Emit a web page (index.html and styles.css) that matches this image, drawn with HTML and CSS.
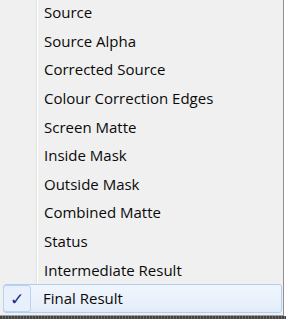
FILE: index.html
```html
<!DOCTYPE html>
<html lang="en">
<head>
  <meta charset="UTF-8" />
  <title>View Menu</title>
  <link rel="stylesheet" href="styles.css">
</head>
<body>
  <div class="menu">
    <ul class="items">
      <li class="item"><span class="check"></span><span class="label">Source</span></li>
      <li class="item"><span class="check"></span><span class="label">Source Alpha</span></li>
      <li class="item"><span class="check"></span><span class="label">Corrected Source</span></li>
      <li class="item"><span class="check"></span><span class="label">Colour Correction Edges</span></li>
      <li class="item"><span class="check"></span><span class="label">Screen Matte</span></li>
      <li class="item"><span class="check"></span><span class="label">Inside Mask</span></li>
      <li class="item"><span class="check"></span><span class="label">Outside Mask</span></li>
      <li class="item"><span class="check"></span><span class="label">Combined Matte</span></li>
      <li class="item"><span class="check"></span><span class="label">Status</span></li>
      <li class="item"><span class="check"></span><span class="label">Intermediate Result</span></li>
      <li class="item active"><span class="check">&#10003;</span><span class="label">Final Result</span></li>
    </ul>
  </div>
  <div class="below"></div>
</body>
</html>
```

FILE: styles.css
```css
html, body { margin: 0; padding: 0; }
body {
  width: 286px;
  height: 319px;
  overflow: hidden;
  background: #fff;
  font-family: "Open Sans", "Noto Sans", sans-serif;
}
.menu {
  width: 283px;
  height: 315px;
  border-right: 1px solid #8f8f8f;
  border-bottom: 1px solid #a0a0a0;
  background: linear-gradient(to right, #f0f0f0 36px, #e2e3e3 36px 37px, #fff 37px 38px, #f0f0f0 38px);
  overflow: hidden;
}
.items {
  list-style: none;
  margin: -2px 0 0 0;
  padding: 0 1px 0 3px;
}
.item {
  display: flex;
  align-items: center;
  height: 28.6px;
  font-size: 15px;
  color: #0a0a0a;
  box-sizing: border-box;
  border: 1px solid transparent;
  border-radius: 3px;
}
.check {
  width: 28px;
  height: 100%;
  display: flex;
  align-items: center;
  justify-content: center;
  box-sizing: border-box;
}
.label { padding-left: 12px; }
.item.active {
  border-color: #aecff3;
  background: linear-gradient(to bottom, #f1f6fd, #e3edfa);
}
.item.active .check {
  border: 1px solid #b8d4f2;
  border-radius: 3px;
  margin-left: -1px;
  background: #e8f0fb;
  color: #1b2a8c;
  font-size: 17px;
}
.below {
  height: 3px;
  background: repeating-linear-gradient(to right, #444 0 2px, #6a6a6a 2px 3px);
}
```
